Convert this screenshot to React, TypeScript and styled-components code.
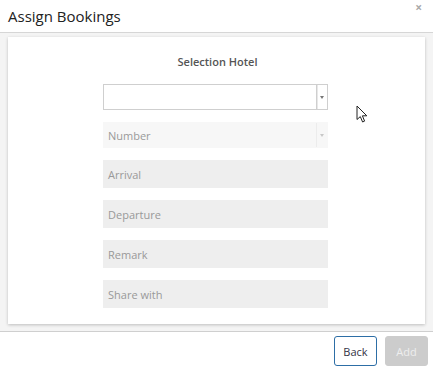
import styled, { createGlobalStyle } from 'styled-components';

const GlobalStyle = createGlobalStyle`
  html, body {
    margin: 0;
    padding: 0;
    background: #fff;
    font-family: 'Open Sans', 'Liberation Sans', sans-serif;
  }
  * {
    box-sizing: border-box;
  }
`;

const fields = ['Arrival', 'Departure', 'Remark', 'Share with'];

const App = () => {
  return (
    <>
      <GlobalStyle />
      <Modal>
        <Header>
          <Title>Assign Bookings</Title>
          <Close>×</Close>
        </Header>
        <Body>
          <Card>
            <Label>Selection Hotel</Label>
            <Select>
              <span />
              <Caret>
                <Arrow />
              </Caret>
            </Select>
            <Select disabled>
              <span>Number</span>
              <Caret disabled>
                <Arrow disabled />
              </Caret>
            </Select>
            {fields.map(f => (
              <Field key={f}>{f}</Field>
            ))}
          </Card>
        </Body>
        <Footer>
          <Button variant="back">Back</Button>
          <Button variant="add">Add</Button>
        </Footer>
        <Pointer width="13" height="19" viewBox="0 0 13 19">
          <path
            d="M1 1 L1 14.5 L4.3 11.6 L6.6 17 L8.6 16.1 L6.4 10.8 L10.8 10.8 Z"
            fill="#fff"
            stroke="#222"
            strokeWidth="1"
            strokeLinejoin="round"
          />
        </Pointer>
      </Modal>
    </>
  );
};

const Modal = styled.div`
  position: relative;
  width: 433px;
  height: 369px;
  background: #fff;
  display: flex;
  flex-direction: column;
`;

const Header = styled.header`
  height: 33px;
  display: flex;
  justify-content: space-between;
  align-items: flex-start;
  padding: 0 11px 0 8px;
  border-bottom: 1px solid #d6d6d6;
`;

const Title = styled.h1`
  margin: 5px 0 0;
  font-size: 15px;
  font-weight: 400;
  color: #222;
  line-height: 22px;
`;

const Close = styled.span`
  margin-top: 2px;
  font-size: 12px;
  font-weight: 700;
  color: #aaa;
  line-height: 12px;
`;

const Body = styled.section`
  height: 299px;
  background: #f4f4f4;
  padding: 4px 8px 6px;
  border-bottom: 1px solid #cfcfcf;
`;

const Card = styled.div`
  height: 287px;
  background: #fff;
  box-shadow: 0 1px 3px rgba(0, 0, 0, 0.22);
  display: flex;
  flex-direction: column;
  align-items: center;
  padding-top: 18px;
`;

const Label = styled.div`
  font-size: 11px;
  font-weight: 600;
  color: #555;
  line-height: 14px;
  margin-bottom: 15px;
  margin-left: 2px;
`;

const Select = styled.div<{ disabled?: boolean }>`
  width: 225px;
  height: 26px;
  display: flex;
  justify-content: space-between;
  align-items: center;
  border: 1px solid ${p => (p.disabled ? '#f7f7f7' : '#cfcfcf')};
  background: ${p => (p.disabled ? '#f7f7f7' : '#fff')};
  margin: 0 2px 12px 0;
  font-size: 11px;
  color: #9a9a9a;
  padding-left: 4px;
`;

const Caret = styled.div<{ disabled?: boolean }>`
  width: 11px;
  height: 100%;
  display: flex;
  align-items: center;
  justify-content: center;
  border-left: 1px solid ${p => (p.disabled ? '#ececec' : '#cfcfcf')};
  box-shadow: ${p => (p.disabled ? 'none' : 'inset 1px 0 0 #e8e8e8')};
`;

const Arrow = styled.span<{ disabled?: boolean }>`
  width: 0;
  height: 0;
  border-left: 2.5px solid transparent;
  border-right: 2.5px solid transparent;
  border-top: 3px solid ${p => (p.disabled ? '#c8c8c8' : '#777')};
`;

const Field = styled.div`
  width: 225px;
  height: 28px;
  background: #eeeeee;
  margin: 0 2px 12px 0;
  display: flex;
  align-items: center;
  padding-left: 5px;
  font-size: 11px;
  color: #999;
`;

const Footer = styled.footer`
  flex: 1;
  display: flex;
  justify-content: flex-end;
  align-items: flex-start;
  gap: 8px;
  padding: 4px 5px 0 0;
`;

const Button = styled.button<{ variant: 'back' | 'add' }>`
  height: 30px;
  width: 43px;
  border-radius: 3px;
  font-family: inherit;
  font-size: 11px;
  padding: 0;
  border: 1px solid ${p => (p.variant === 'back' ? '#2d6ea6' : '#cccccc')};
  background: ${p => (p.variant === 'back' ? '#fff' : '#cccccc')};
  color: ${p => (p.variant === 'back' ? '#334' : '#eee')};
`;

const Pointer = styled.svg`
  position: absolute;
  left: 356px;
  top: 105px;
`;

export default App;
